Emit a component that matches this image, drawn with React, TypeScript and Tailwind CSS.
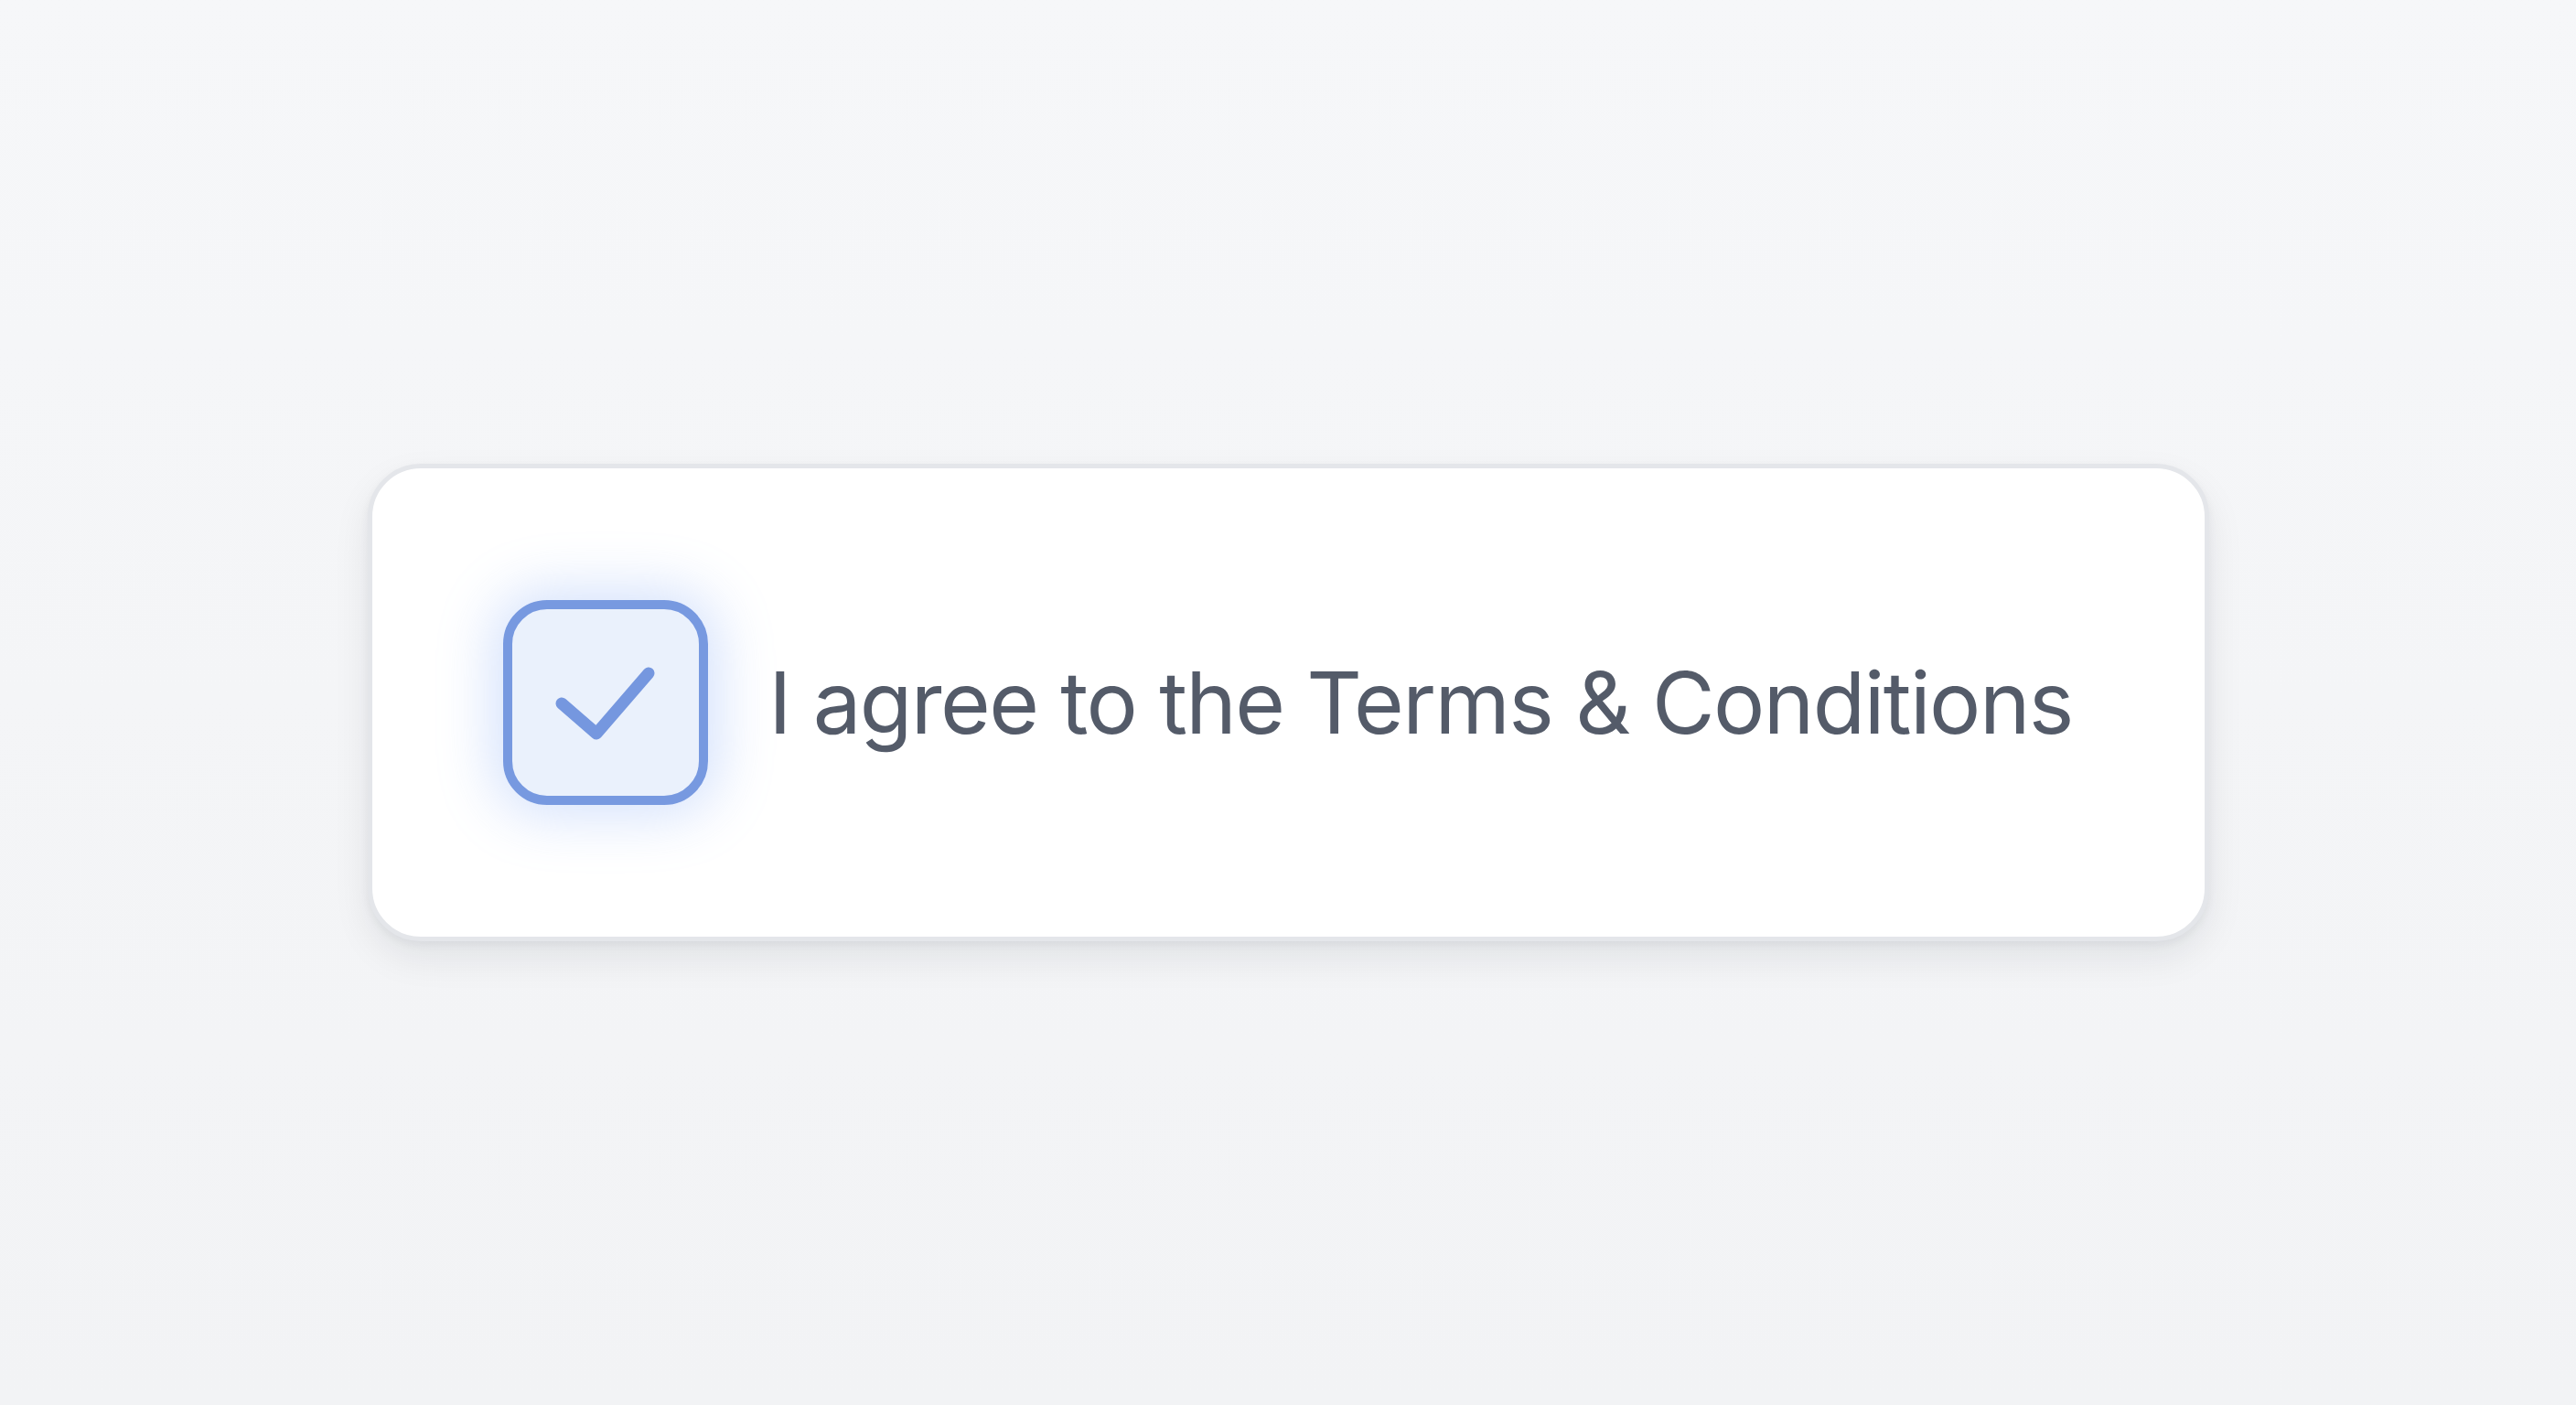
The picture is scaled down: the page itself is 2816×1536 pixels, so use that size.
export default function App() {
  return (
    <div className="flex h-[1536px] w-[2816px] items-center justify-center bg-gradient-to-b from-[#f6f7f9] to-[#f2f3f5] font-['Inter',sans-serif]">
      <div className="flex h-[522px] w-[2013px] items-center justify-center gap-[66px] rounded-[58px] border-[5px] border-[#e4e6ea] bg-white shadow-[0_18px_40px_rgba(15,23,42,0.08),0_4px_10px_rgba(15,23,42,0.05)]">
        <Checkbox />
        <span className="whitespace-nowrap text-[94px] leading-none font-normal tracking-[-1.6px] text-[#545b69]">
          I agree to the Terms &amp; Conditions
        </span>
      </div>
    </div>
  );
}

function Checkbox() {
  return (
    <div className="flex h-[224px] w-[224px] shrink-0 items-center justify-center rounded-[48px] border-[10px] border-[#7799e0] bg-[#eaf1fc] shadow-[0_0_60px_12px_rgba(125,165,245,0.32)]">
      <svg
        viewBox="0 0 224 224"
        className="h-[224px] w-[224px] shrink-0"
        fill="none"
        stroke="#7597df"
        strokeWidth={13}
        strokeLinecap="round"
        strokeLinejoin="round"
      >
        <polyline points="64,113 102,146 159,80" />
      </svg>
    </div>
  );
}
